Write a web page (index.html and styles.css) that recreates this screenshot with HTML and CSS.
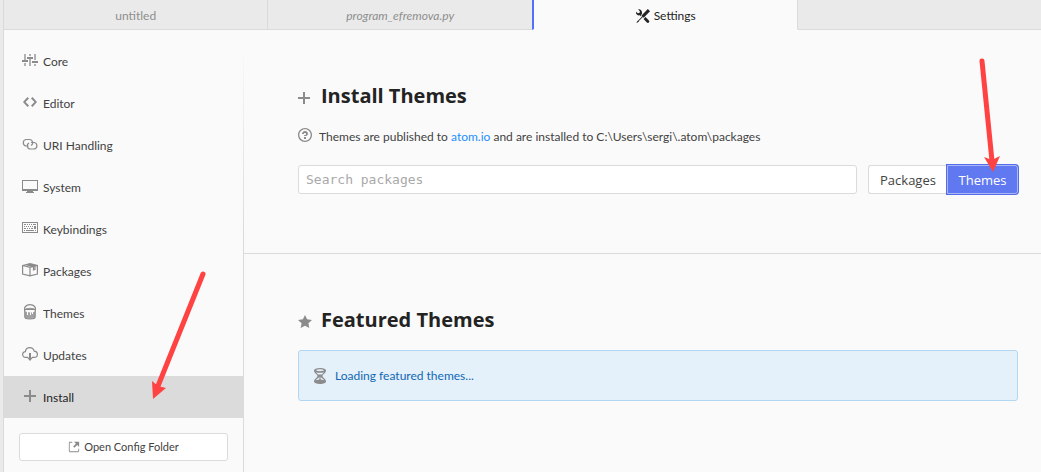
FILE: index.html
```html
<!DOCTYPE html>
<html lang="en">
<head>
<meta charset="utf-8">
<title>Settings</title>
<link rel="stylesheet" href="styles.css">
</head>
<body>
<div class="workspace">
  <nav class="tabs" aria-label="Open tabs">
    <a class="tab" href="#untitled">untitled</a>
    <a class="tab tab-preview" href="#program">program_efremova.py</a>
    <a class="tab tab-active" href="#settings">
      <svg class="tab-icon" viewBox="0 0 16 16"><path d="M4.48 7.27c.26.26 1.28 1.33 1.28 1.33l.56-.58-.88-.91 1.69-1.8s-.76-.74-.43-.45c.32-1.19.03-2.51-.87-3.44C4.93.5 3.66.2 2.52.51l1.93 2-.51 1.96-1.89.52-1.93-1.99C-.19 4.17.1 5.48 1 6.4c.94.98 2.29 1.26 3.48.87zm6.44 1.94l-2.33 2.3 3.84 3.98c.31.33.73.49 1.14.49.41 0 .82-.16 1.14-.49.63-.65.63-1.7 0-2.35l-3.79-3.93zM16 2.53L13.55 0 6.33 7.46l.88.91-4.31 4.46-.99.53-1.39 2.27.35.37 2.2-1.44.51-1.02L7.9 9.08l.88.91L16 2.53z"/></svg>
      Settings
    </a>
    <div class="tabs-rest"></div>
  </nav>
  <div class="settings">
    <aside class="sidebar">
      <nav class="menu" aria-label="Settings sections">
        <a class="menu-item" href="#core"><svg class="icon" viewBox="0 0 16 16"><path opacity=".65" d="M2 2h2v6H2zM2 11h2v3H2zM7 2h2v2H7zM7 7h2v7H7zM12 2h2v6h-2zM12 12h2v2h-2z"/><path d="M0 8h6v2H0zM5 5h6v2H5zM10 9h6v2h-6z"/></svg>Core</a>
        <a class="menu-item" href="#editor"><svg class="icon" viewBox="-1 0 16 16"><path d="M9.5 3L8 4.5 11.5 8 8 11.5 9.5 13 14 8 9.5 3zm-5 0L0 8l4.5 5L6 11.5 2.5 8 6 4.5 4.5 3z"/></svg>Editor</a>
        <a class="menu-item" href="#uri"><svg class="icon line" viewBox="0 0 16 16"><path d="M6.500 10H4A3.300 3.300 0 0 1 4 3.500h3.500a3.200 3.200 0 0 1 1.500 6M9 6.500h3.200a3.300 3.300 0 0 1 0 6.500H8.500a3.200 3.200 0 0 1-1.500-6"/></svg>URI Handling</a>
        <a class="menu-item" href="#system"><svg class="icon" viewBox="0 0 16 16"><path fill-rule="evenodd" d="M0 2h16v11h-5v1h1v1H4v-1h1v-1H0zM1 3v8h14V3z"/></svg>System</a>
        <a class="menu-item" href="#keybindings"><svg class="icon" viewBox="0 0 16 16"><path fill-rule="evenodd" d="M0 2h16v11H0zM1 3v9h14V3z"/><path d="M2 4h2v1H2zM5 4h1v1H5zM7 4h1v1H7zM9 4h1v1H9zM11 4h3v1h-3zM2 6h1v1H2zM4 6h1v1H4zM6 6h1v1H6zM8 6h1v1H8zM10 6h1v1h-1zM2 8h2v1H2zM5 8h1v1H5zM7 8h1v1H7zM9 8h2v1H9zM12 6h2v3h-2zM2 10h1v1H2zM4 10h8v1H4zM13 10h1v1h-1z"/></svg>Keybindings</a>
        <a class="menu-item" href="#packages"><svg class="icon line" viewBox="0 0 16 16"><path d="M.6 3.500 8 1.500l7.400 2v8.500L8 13.900.6 12zM.6 3.500 8 5.400l7.400-1.900M8 5.400v8.500M4 2.600l7.500 2v3.200l1.500-.5V4L6 2"/></svg>Packages</a>
        <a class="menu-item" href="#themes"><svg class="icon line" viewBox="0 0 16 16"><path d="M2.600 7C1.500 3.500 4 .6 8 .6S14.500 3.500 13.400 7M3 5.500h10M3.500 5.500C4 3.800 12 3.800 12.500 5.500M2.800 5.500V13c0 1 2 1.900 5.200 1.900s5.200-.9 5.200-1.900V5.500"/><path class="solid" d="M3 7.500 5 8v3h1V8.300h2V11h1V8.300l1 .1V10h1V8.200l2-.7V13c0 1-2 1.500-5 1.500S3 14 3 13z" opacity=".8"/></svg>Themes</a>
        <a class="menu-item" href="#updates"><svg class="icon line" viewBox="0 0 16 16"><path d="M6 11.400H3.600A2.900 2.900 0 0 1 3.400 5.600C3.600 3.200 5.500 1.600 7.800 1.600c2.200 0 3.800 1.300 4.400 3.500 1.900.1 3.200 1.400 3.200 3.100 0 1.800-1.400 3.200-3.200 3.200H10"/><path class="solid" d="M7 7h2v4.500h2l-3 3.500-3-3.500h2z"/></svg>Updates</a>
        <a class="menu-item menu-item-active" href="#install"><svg class="icon" viewBox="0 0 16 16"><path d="M7 2h2v5h5v2H9v5H7V9H2V7h5z"/></svg>Install</a>
      </nav>
      <button class="config-button" type="button">
        <svg class="config-icon" viewBox="0 1 12 14"><path d="M11 10h1v3c0 .55-.45 1-1 1H1c-.55 0-1-.45-1-1V3c0-.55.45-1 1-1h3v1H1v10h10v-3zM6 2l2.250 2.250L5 7.500 6.500 9l3.250-3.250L12 8V2H6z"/></svg>
        Open Config Folder
      </button>
    </aside>
    <main class="panels">
      <section class="panel panel-install">
        <h1 class="heading"><svg class="heading-icon" viewBox="0 0 14 14"><path d="M5 1h2v5h5v2H7v5H5V8H0V6h5z"/></svg>Install Themes</h1>
        <p class="note"><svg class="note-icon" viewBox="0 1 14 14"><path d="M6 10h2v2H6v-2zm4-3.500C10 8.640 8 9 8 9H6c0-.55.45-1 1-1h.5c.28 0 .5-.22.5-.5v-1c0-.28-.22-.5-.5-.5h-1c-.28 0-.5.22-.5.5V7H4c0-1.500 1.500-3 3-3s3 1 3 2.500zM7 2.300c3.140 0 5.700 2.560 5.700 5.700s-2.560 5.700-5.700 5.700A5.710 5.710 0 0 1 1.300 8c0-3.140 2.560-5.700 5.700-5.700zM7 1C3.140 1 0 4.140 0 8s3.140 7 7 7 7-3.140 7-7-3.140-7-7-7z"/></svg><span>Themes are published to <a class="link" href="#atom">atom.io</a> and are installed to C:\Users\sergi\.atom\packages</span></p>
        <form class="search">
          <input class="search-input" type="text" placeholder="Search packages" aria-label="Search packages">
          <div class="toggle">
            <button class="toggle-button" type="button">Packages</button>
            <button class="toggle-button toggle-selected" type="button">Themes</button>
          </div>
        </form>
      </section>
      <section class="panel">
        <h2 class="heading"><svg class="heading-icon" viewBox="0 1 14 14"><path d="M14 6l-4.900-.64L7 1 4.900 5.360 0 6l3.600 3.260L2.670 14 7 11.670 11.330 14l-.93-4.740z"/></svg>Featured Themes</h2>
        <div class="alert" role="status"><svg class="alert-icon" viewBox="0 0 14 16"><path fill-rule="evenodd" d="M1 2.500C1 1 3.500 0 7 0s6 1 6 2.500c0 2.500-3.500 4-3.500 5.500S13 11 13 13.500C13 15 10.500 16 7 16s-6-1-6-2.500C1 11 4.500 9.500 4.500 8S1 5 1 2.500zM3 2.300C4 3 5.500 3.200 7 3.200S10 3 11 2.300C10 1.600 8.500 1.300 7 1.300s-3 .3-4 1zM3 4.200C3.800 5.200 4.500 6 5 6.500h4c.5-.5 1.200-1.300 2-2.300-2 .7-6 .7-8 0zM6.400 8.500c0 1.300-2.900 2.300-3.700 3.700l3.700-.7zM7.600 8.500v3l3.700.7c-.8-1.400-3.700-2.400-3.700-3.700z"/></svg>Loading featured themes...</div>
      </section>
    </main>
  </div>
  <svg class="pointer pointer-install" viewBox="0 0 60 130" aria-hidden="true"><path class="shaft" d="M53 5 8 117"/><path d="M3 130 2 112 8 117 16 119z"/></svg>
  <svg class="pointer pointer-themes" viewBox="0 0 31 120" aria-hidden="true"><path class="shaft" d="M13 6 23 106"/><path d="M24 117 15 102l8 3 8-4z"/></svg>
</div>
</body>
</html>
```
FILE: styles.css
```css
* {
  box-sizing: border-box;
}

body {
  margin: 0;
  background: #fafafa;
  color: #424242;
  font: 12px/18px Lato, "Open Sans", sans-serif;
}

.workspace {
  position: relative;
  display: flex;
  flex-direction: column;
  min-height: 100vh;
  padding-left: 3px;
  background: #eaeaea;
  overflow: hidden;
}

a {
  color: inherit;
  text-decoration: none;
}

svg {
  flex: none;
  fill: #8b8b8b;
}

.tabs {
  display: flex;
  height: 30px;
  border-left: 1px solid #dbdbdb;
}

.tab {
  display: flex;
  flex: 265 1 0;
  align-items: center;
  justify-content: center;
  gap: 4px;
  padding-top: 2px;
  border-right: 1px solid #dbdbdb;
  border-bottom: 1px solid #dbdbdb;
  color: #8e8e8e;
}

.tab-preview {
  border-right: 0;
  font-style: italic;
}

.tab-active {
  border-bottom-color: #fafafa;
  border-left: 2px solid #526fff;
  background: #fafafa;
  color: #232323;
}

.tab-icon {
  width: 14px;
  height: 14px;
  fill: #232323;
}

.tabs-rest {
  flex: 244 1 0;
  border-bottom: 1px solid #dbdbdb;
}

.settings {
  display: flex;
  flex: 1;
  border-left: 1px solid #dbdbdb;
  background: #fafafa;
}

.sidebar {
  flex: none;
  width: 240px;
  padding-top: 10px;
  border-right: 1px solid;
  border-image: linear-gradient(#fafafa 10px, #dbdbdb 200px) 1;
}

.menu-item {
  display: flex;
  align-items: center;
  gap: 5px;
  height: 42px;
  padding: 1px 18px 0;
}

.menu-item-active {
  background: #dbdbdb;
  color: #232323;
}

.icon {
  width: 16px;
  height: 16px;
  margin-bottom: 3px;
}

.line {
  fill: none;
  stroke: #8b8b8b;
  stroke-width: 1.2;
}

.solid {
  fill: #8b8b8b;
  stroke: none;
}

button {
  font-family: inherit;
}

.config-button {
  display: flex;
  align-items: center;
  justify-content: center;
  gap: 4px;
  width: 209px;
  height: 28px;
  margin: 15px;
  padding: 0 0 2px;
  border: 1px solid #dbdbdb;
  border-radius: 3px;
  background: #fff;
  color: #424242;
  font-size: 11px;
}

.config-icon {
  width: 12px;
  height: 12px;
  margin-top: 2px;
}

.panels {
  flex: 1;
}

.panel {
  padding: 52px 23px 52px 54px;
}

.panel-install {
  height: 224px;
  border-bottom: 1px solid #dbdbdb;
}

.heading {
  display: flex;
  align-items: center;
  gap: 9px;
  margin: 0;
  color: #232323;
  font: 700 20px/28px "Open Sans", "Noto Sans", sans-serif;
}

.heading-icon {
  width: 14px;
  height: 14px;
  margin-top: 3px;
}

.note {
  display: flex;
  align-items: center;
  gap: 7px;
  margin: 18px 0 19px;
}

.note-icon {
  width: 14px;
  height: 14px;
  margin-bottom: 4px;
}

.link {
  color: #1a8fff;
}

.search {
  display: flex;
  gap: 11px;
}

.search-input {
  flex: 1;
  min-width: 0;
  height: 29px;
  padding: 0 7px;
  border: 1px solid #dbdbdb;
  border-radius: 3px;
  background: #fff;
  font: 13px "DejaVu Sans Mono", monospace;
}

.search-input::placeholder {
  color: #a9a9a9;
}

.toggle {
  display: flex;
}

.toggle-button {
  width: 79px;
  height: 29px;
  padding: 0;
  border: 1px solid #dbdbdb;
  border-right: 0;
  border-radius: 3px 0 0 3px;
  background: #fff;
  color: #424242;
  font: 13px "Open Sans", "Noto Sans", sans-serif;
}

.toggle-selected {
  width: 71px;
  border: 1px solid #aab6f5;
  border-radius: 0 3px 3px 0;
  background: #6078f0;
  box-shadow: 0 0 0 1px #526cec;
  color: #fff;
}

.alert {
  display: flex;
  align-items: center;
  gap: 8px;
  margin-top: 16px;
  padding: 16px 14px 15px;
  border: 1px solid #b2d7f2;
  border-radius: 3px;
  background: #e4f0fa;
  color: #1068b4;
}

.alert-icon {
  width: 14px;
  height: 16px;
}

.pointer {
  position: absolute;
  fill: #ff4343;
  pointer-events: none;
}

.shaft {
  fill: none;
  stroke: #ff4343;
  stroke-width: 5;
  stroke-linecap: round;
}

.pointer-install {
  top: 269px;
  left: 150px;
  width: 60px;
}

.pointer-themes {
  top: 55px;
  left: 969px;
  width: 31px;
}
```
